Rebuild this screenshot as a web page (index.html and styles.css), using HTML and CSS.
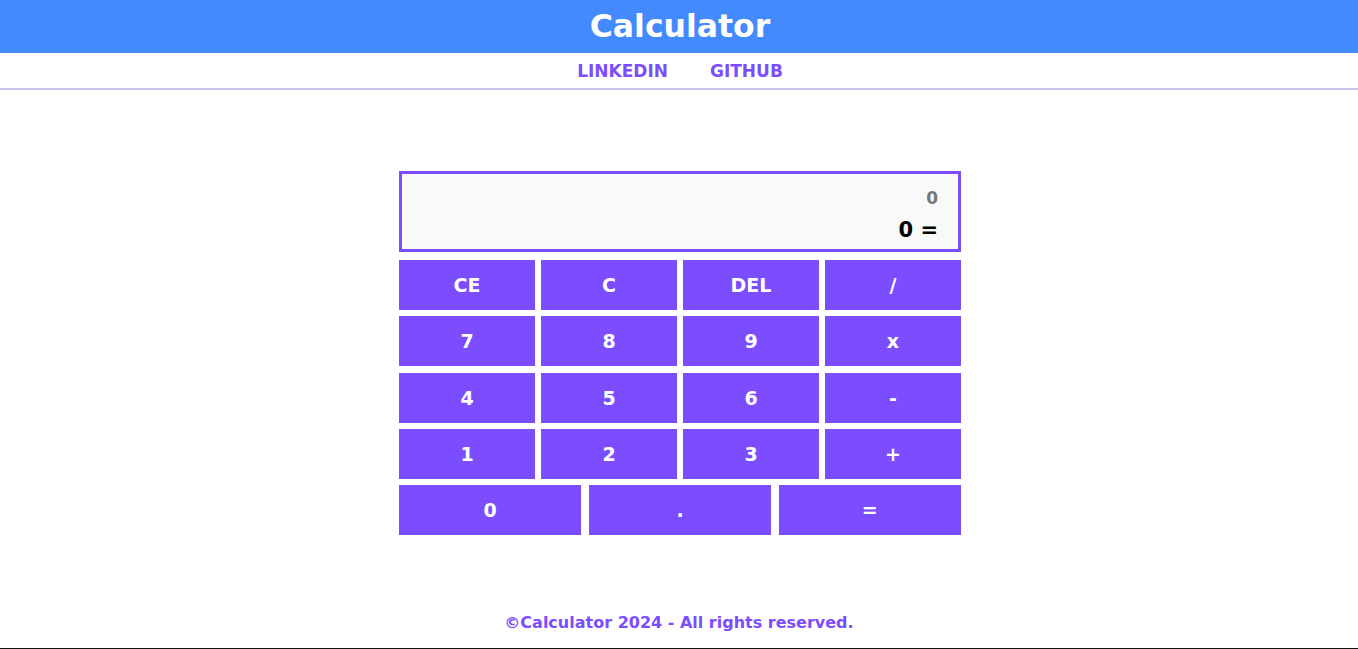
FILE: index.html
```html
<!DOCTYPE html>
<html lang="en">
<head>
<meta charset="utf-8">
<title>Calculator</title>
<link rel="stylesheet" href="styles.css">
</head>
<body>
<header class="topbar"><h1 class="title">Calculator</h1></header>
<nav class="nav">
  <a class="nav-link" href="#">LINKEDIN</a>
  <a class="nav-link" href="#">GITHUB</a>
</nav>
<main class="main">
  <div class="calc">
    <div class="display">
      <div class="prev">0</div>
      <div class="current">0 =</div>
    </div>
    <div class="keys">
      <button class="key">CE</button>
      <button class="key">C</button>
      <button class="key">DEL</button>
      <button class="key">/</button>
      <button class="key">7</button>
      <button class="key">8</button>
      <button class="key">9</button>
      <button class="key">x</button>
      <button class="key">4</button>
      <button class="key">5</button>
      <button class="key">6</button>
      <button class="key">-</button>
      <button class="key">1</button>
      <button class="key">2</button>
      <button class="key">3</button>
      <button class="key">+</button>
    </div>
    <div class="keys keys-last">
      <button class="key">0</button>
      <button class="key">.</button>
      <button class="key">=</button>
    </div>
  </div>
</main>
<footer class="footer">
  <p class="copy">©Calculator 2024 - All rights reserved.</p>
</footer>
<div class="bottom-line"></div>
</body>
</html>
```
FILE: styles.css
```css
html, body {
  margin: 0;
  padding: 0;
}
body {
  font-family: "DejaVu Sans", Verdana, sans-serif;
  background: #ffffff;
  height: 649px;
  overflow: hidden;
  display: flex;
  flex-direction: column;
}
.topbar {
  background: #448aff;
  height: 53px;
  display: flex;
  align-items: center;
  justify-content: center;
}
.title {
  margin: 0;
  color: #ffffff;
  font-size: 31.5px;
  font-weight: bold;
  line-height: 1;
  padding-left: 2px;
}
.nav {
  display: flex;
  align-items: center;
  justify-content: center;
  gap: 42px;
  border-bottom: 2px solid #cdbfee;
  padding-left: 2px;
  padding-top: 1px;
  box-sizing: border-box;
  height: 37px;
}
.nav-link {
  color: #7c4dff;
  font-weight: bold;
  font-size: 17px;
  text-decoration: none;
}
.main {
  flex: 1;
  display: flex;
  justify-content: center;
  padding-top: 81px;
  padding-left: 2px;
}
.calc {
  width: 562px;
  display: flex;
  flex-direction: column;
  gap: 8px;
}
.display {
  box-sizing: border-box;
  height: 81px;
  border: 3px solid #7c4dff;
  background: #f9f9f9;
  padding: 12px 20px 0 0;
  text-align: right;
  font-weight: bold;
}
.prev {
  color: #777777;
  font-size: 17px;
  line-height: 24px;
}
.current {
  color: #000000;
  font-size: 21px;
  line-height: 32px;
  padding-top: 4px;
}
.keys {
  display: grid;
  grid-template-columns: repeat(4, 1fr);
  column-gap: 6px;
  row-gap: 6.3px;
}
.keys-last {
  grid-template-columns: repeat(3, 1fr);
  column-gap: 7.5px;
  margin-top: -1.7px;
}
.key {
  height: 50px;
  border: none;
  background: #7c4dff;
  color: #ffffff;
  font-family: "DejaVu Sans", Verdana, sans-serif;
  font-weight: bold;
  font-size: 19px;
  padding: 0;
}
.footer {
  height: 50px;
  display: flex;
  justify-content: center;
}
.copy {
  margin: 0;
  padding-top: 15px;
  color: #7c4dff;
  font-weight: bold;
  font-size: 16px;
  line-height: 20px;
}
.bottom-line {
  height: 1px;
  background: #111111;
}
```
